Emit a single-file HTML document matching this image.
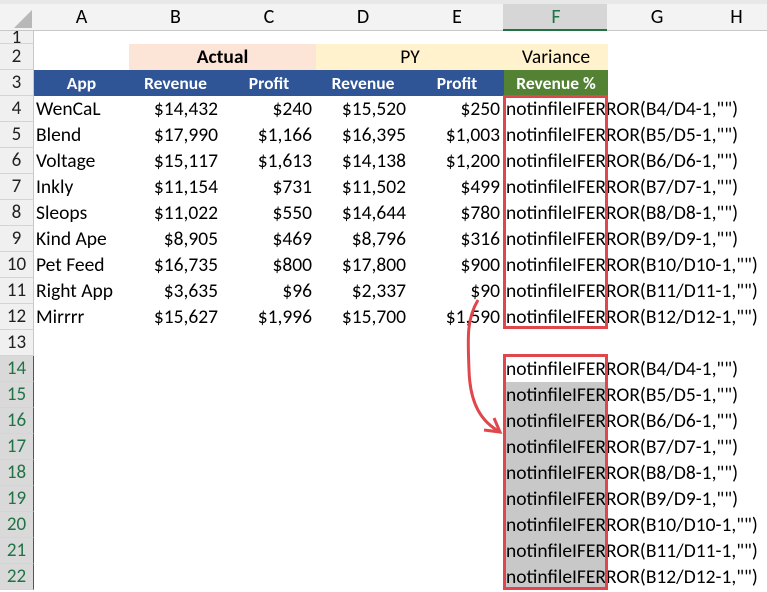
<!DOCTYPE html>
<html><head><meta charset="utf-8"><style>
body{margin:0;width:767px;height:592px;overflow:hidden;background:#fff;font-family:Calibri,Carlito,"Liberation Sans",sans-serif;position:relative}
.a{position:absolute;white-space:nowrap;font-size:19.5px;line-height:26px}
.r{text-align:right}
.c{text-align:center}
.h{font-size:17.5px;color:#fff;font-weight:bold}
</style></head><body>
<div class="a" style="left:0;top:0;width:767px;height:4px;background:#e8e8e8"></div>
<div class="a" style="left:0;top:4px;width:767px;height:26px;background:#f3f3f3;border-bottom:1px solid #c8c8c8"></div>
<svg class="a" style="left:14px;top:10px" width="18" height="18"><polygon points="18,0 18,18 0,18" fill="#b8b8b8"/></svg>
<div class="a" style="left:503px;top:4px;width:104px;height:25px;background:#d6d6d6;border-bottom:2px solid #217346"></div>
<div class="a c" style="left:34px;top:4px;width:95px;font-size:20px">A</div>
<div class="a c" style="left:129px;top:4px;width:93px;font-size:20px">B</div>
<div class="a c" style="left:222px;top:4px;width:94px;font-size:20px">C</div>
<div class="a c" style="left:316px;top:4px;width:94px;font-size:20px">D</div>
<div class="a c" style="left:410px;top:4px;width:94px;font-size:20px">E</div>
<div class="a c" style="left:504px;top:4px;width:104px;font-size:20px;color:#217346">F</div>
<div class="a c" style="left:608px;top:4px;width:98px;font-size:20px">G</div>
<div class="a c" style="left:706px;top:4px;width:61px;font-size:20px">H</div>
<div id="rh"></div>
<div class="a" style="left:129px;top:44px;width:187px;height:26px;background:#fce4d6"></div>
<div class="a" style="left:316px;top:44px;width:292px;height:26px;background:#fff2cc"></div>
<div class="a c" style="left:129px;top:44px;width:187px;font-weight:bold">Actual</div>
<div class="a c" style="left:316px;top:44px;width:188px">PY</div>
<div class="a c" style="left:504px;top:44px;width:104px">Variance</div>
<div class="a" style="left:34px;top:70px;width:470px;height:26px;background:#2f5597"></div>
<div class="a" style="left:504px;top:70px;width:104px;height:26px;background:#548235"></div>
<div class="a c h" style="left:34px;top:70px;width:95px">App</div>
<div class="a c h" style="left:129px;top:70px;width:93px">Revenue</div>
<div class="a c h" style="left:222px;top:70px;width:94px">Profit</div>
<div class="a c h" style="left:316px;top:70px;width:94px">Revenue</div>
<div class="a c h" style="left:410px;top:70px;width:94px">Profit</div>
<div class="a c h" style="left:504px;top:70px;width:104px">Revenue %</div>
<div class="a" style="left:504px;top:382px;width:104px;height:208px;background:#c8c8c8"></div>
<div id="body"></div>
<svg class="a" style="left:0;top:0" width="767" height="592">
<rect x="504.5" y="96.5" width="102" height="231" fill="none" stroke="#e0474c" stroke-width="3"/>
<rect x="504.5" y="355.5" width="102" height="233" fill="none" stroke="#e0474c" stroke-width="3"/>
<path d="M478 300 C466 320 468 340 469 370 C470 405 482 422 500 432" fill="none" stroke="#e0474c" stroke-width="3"/>
<path d="M484 430 L500 432 L494 418" fill="none" stroke="#e0474c" stroke-width="3"/>
</svg>
<script>
var rh='',b='';
for(var n=1;n<=22;n++){var tp=n==1?31:44+(n-2)*26,h=n==1?13:26;var sel=n>=14;
rh+='<div class="a c" style="left:0;top:'+tp+'px;width:33px;height:'+(h-1)+'px;line-height:'+h+'px;overflow:hidden;background:'+(sel?'#d9d9d9':'#f0f0f0')+';border-bottom:1px solid #d4d4d4;border-right:1px solid '+(sel?'#217346':'#c8c8c8')+';font-size:19px;color:'+(sel?'#217346':'#222')+'">'+n+'</div>';}
var d=[["WenCaL","$14,432","$240","$15,520","$250"],["Blend","$17,990","$1,166","$16,395","$1,003"],["Voltage","$15,117","$1,613","$14,138","$1,200"],["Inkly","$11,154","$731","$11,502","$499"],["Sleops","$11,022","$550","$14,644","$780"],["Kind Ape","$8,905","$469","$8,796","$316"],["Pet Feed","$16,735","$800","$17,800","$900"],["Right App","$3,635","$96","$2,337","$90"],["Mirrrr","$15,627","$1,996","$15,700","$1,590"]];
var L=[129,222,316,410,504];
for(var i=0;i<9;i++){var tp=96+i*26;
b+='<div class="a" style="left:36px;top:'+tp+'px">'+d[i][0]+'</div>';
for(var j=1;j<5;j++)b+='<div class="a r" style="left:'+L[j-1]+'px;top:'+tp+'px;width:'+(L[j]-L[j-1]-4)+'px">'+d[i][j]+'</div>';
b+='<div class="a" style="left:506px;top:'+tp+'px">notinfileIFERROR(B'+(i+4)+'/D'+(i+4)+'-1,"")</div>';
b+='<div class="a" style="left:506px;top:'+(356+i*26)+'px">notinfileIFERROR(B'+(i+4)+'/D'+(i+4)+'-1,"")</div>';}
document.getElementById('rh').outerHTML=rh;document.getElementById('body').outerHTML=b;
</script>
</body></html>
